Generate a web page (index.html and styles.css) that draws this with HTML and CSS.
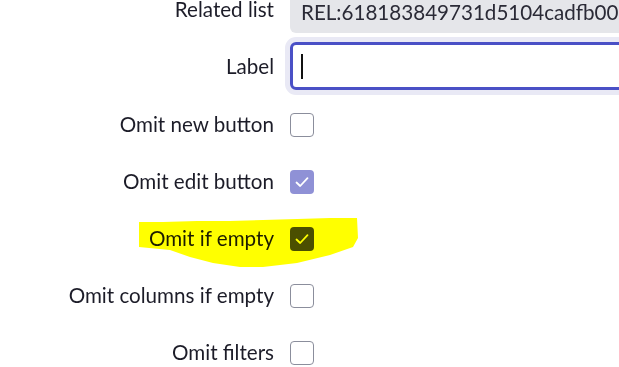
FILE: index.html
```html
<!DOCTYPE html>
<html>
<head>
  <title>Related list settings</title>
  <link rel="stylesheet" href="styles.css">
</head>
<body>
  <div class="form">
    <div class="row">
      <div class="field-label">Related list</div>
      <div class="text-input readonly">REL:618183849731d5104cadfb00ea6ff1c4</div>
    </div>

    <div class="row label-row">
      <div class="field-label">Label</div>
      <div class="text-input focused"><span class="caret"></span></div>
    </div>

    <div class="row check-row">
      <div class="field-label">Omit new button</div>
      <div class="checkbox"></div>
    </div>

    <div class="row check-row">
      <div class="field-label">Omit edit button</div>
      <div class="checkbox checked muted">
        <svg viewBox="0 0 24 24"><path d="M6.5 12.5 L10.2 16 L17.5 8.2" /></svg>
      </div>
    </div>

    <div class="row check-row">
      <div class="field-label">Omit if empty</div>
      <div class="checkbox checked">
        <svg viewBox="0 0 24 24"><path d="M6.5 12.5 L10.2 16 L17.5 8.2" /></svg>
      </div>
    </div>

    <div class="row check-row">
      <div class="field-label">Omit columns if empty</div>
      <div class="checkbox"></div>
    </div>

    <div class="row check-row">
      <div class="field-label">Omit filters</div>
      <div class="checkbox"></div>
    </div>
  </div>

  <!-- highlighter mark drawn over the screenshot -->
  <svg class="highlight" width="619" height="367" viewBox="0 0 619 367">
    <path d="M139 222 L163 222 L197 221 L230 221 L263 220 L297 219 L330 218 L357 218
             L358 238 L353 247 L330 255 L297 263 L263 267 L240 267 L213 263
             L190 257 L170 250 L139 247 Z" />
  </svg>
</body>
</html>
```

FILE: styles.css
```css
:root {
  --text-dark: #1c1c28;
  --focus-blue: #4a50c6;
  --readonly-bg: #e5e6ea;
  --box-border: #8b8e9c;
}

html, body {
  margin: 0;
  height: 100%;
  overflow: hidden;
}

body {
  position: relative;
  background: #fff;
  font-family: Lato, 'Noto Sans', sans-serif;
  font-size: 20.6px;
  color: var(--text-dark);
}

.form {
  display: flex;
  flex-direction: column;
  gap: 9px;
  margin-top: -15px;
}

.row {
  display: grid;
  grid-template-columns: 274px 420px;
  column-gap: 16px;
  align-items: center;
  min-height: 48px;
}

.label-row {
  margin-bottom: 2px;
}

.field-label {
  text-align: right;
  white-space: nowrap;
  margin-top: -1px;
}

.check-row .field-label {
  margin-top: -3px;
}

.text-input {
  box-sizing: border-box;
  height: 48px;
  border-radius: 6px;
  display: flex;
  align-items: center;
  padding-left: 11px;
  white-space: nowrap;
  overflow: hidden;
}

.readonly {
  background: var(--readonly-bg);
  color: #2a2a36;
  align-items: flex-end;
  padding-bottom: 9px;
}

.focused {
  border: 3px solid var(--focus-blue);
  box-shadow: 0 0 0 5px #e9e9f5;
  padding-left: 8px;
}

.caret {
  width: 2px;
  height: 25px;
  background: #111;
}

.checkbox {
  box-sizing: border-box;
  width: 24px;
  height: 24px;
  border: 1.5px solid var(--box-border);
  border-radius: 4px;
  background: #fff;
}

.checkbox svg {
  display: block;
  width: 100%;
  height: 100%;
}

.checkbox path {
  fill: none;
  stroke: #fff;
  stroke-width: 1.8;
  stroke-linecap: round;
  stroke-linejoin: round;
}

.checked {
  border: none;
  background: #4b4fbd;
}

.checked.muted {
  background: #8f91d6;
}

.highlight {
  position: absolute;
  top: 0;
  left: 0;
  mix-blend-mode: multiply;
  pointer-events: none;
}

.highlight path {
  fill: #ffff00;
}
```
